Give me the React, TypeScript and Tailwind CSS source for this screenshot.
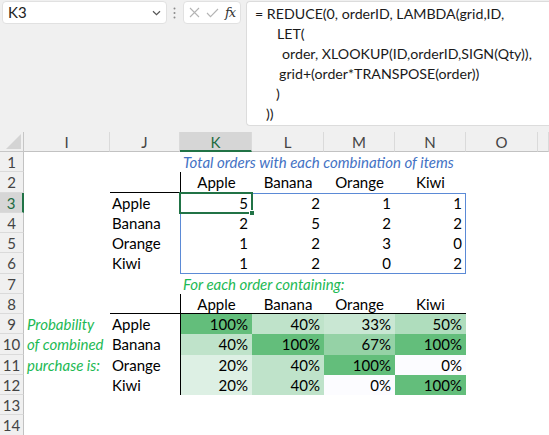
import React from 'react';

const COL = ['', 'col-start-1', 'col-start-2', 'col-start-3', 'col-start-4', 'col-start-5', 'col-start-6', 'col-start-7', 'col-start-8', 'col-start-9'];
const ROW = ['', 'row-start-1', 'row-start-2', 'row-start-3', 'row-start-4', 'row-start-5', 'row-start-6', 'row-start-7', 'row-start-8', 'row-start-9', 'row-start-10', 'row-start-11', 'row-start-12', 'row-start-13', 'row-start-14', 'row-start-15'];

const LETTERS = ['I', 'J', 'K', 'L', 'M', 'N', 'O', ''];
const FRUITS = ['Apple', 'Banana', 'Orange', 'Kiwi'];

const COUNTS = [
  [5, 2, 1, 1],
  [2, 5, 2, 2],
  [1, 2, 3, 0],
  [1, 2, 0, 2],
];

// excel colour scale, white -> green
const SHADE: Record<number, string> = {
  100: 'bg-[#63be7b]',
  67: 'bg-[#95d2a6]',
  50: 'bg-[#afddbd]',
  40: 'bg-[#bfe3ca]',
  33: 'bg-[#c9e7d3]',
  20: 'bg-[#ddf0e4]',
  0: 'bg-[#fcfcff]',
};

const PCT = [
  [100, 40, 33, 50],
  [40, 100, 67, 100],
  [20, 40, 100, 0],
  [20, 40, 0, 100],
];

const FORMULA: { pad: string; text: string }[] = [
  { pad: 'pl-[8px]', text: '= REDUCE(0, orderID, LAMBDA(grid,ID,' },
  { pad: 'pl-[30px]', text: 'LET(' },
  { pad: 'pl-[35px]', text: 'order, XLOOKUP(ID,orderID,SIGN(Qty)),' },
  { pad: 'pl-[32px]', text: 'grid+(order*TRANSPOSE(order))' },
  { pad: 'pl-[29px]', text: ')' },
  { pad: 'pl-[19px]', text: '))' },
];

function FormulaBar() {
  return (
    <div className="flex items-start h-[132px] pt-px pl-[2px]">
      {/* Name box */}
      <div className="w-[165px] h-[23px] bg-white rounded-[4px] border border-[#e1e1e1] flex items-center justify-between pl-[5px] pr-[5px]">
        <span className="text-[15px] leading-none text-[#222]">K3</span>
        <svg width="9" height="6" viewBox="0 0 9 6" className="text-[#555]">
          <path d="M1 1.2 L4.5 4.6 L8 1.2" fill="none" stroke="currentColor" strokeWidth="1.2" />
        </svg>
      </div>

      {/* grip */}
      <svg width="3" height="12" viewBox="0 0 3 12" className="ml-[6px] mt-[6px] text-[#8a8a8a]">
        <circle cx="1.5" cy="1.5" r="1" fill="currentColor" />
        <circle cx="1.5" cy="6" r="1" fill="currentColor" />
        <circle cx="1.5" cy="10.5" r="1" fill="currentColor" />
      </svg>

      {/* cancel / enter / fx */}
      <div className="ml-[7px] w-[58px] h-[23px] bg-white rounded-[4px] border border-[#e1e1e1] flex items-center pl-[5px] gap-[6px]">
        <svg width="11" height="11" viewBox="0 0 11 11" className="text-[#b4b4b4]">
          <path d="M1 1 L10 10 M10 1 L1 10" stroke="currentColor" strokeWidth="1.1" />
        </svg>
        <svg width="13" height="10" viewBox="0 0 13 10" className="text-[#b4b4b4]">
          <path d="M1 5 L4.5 8.7 L12 1" fill="none" stroke="currentColor" strokeWidth="1.1" />
        </svg>
        <span className="font-['DejaVu_Serif',serif] italic text-[13px] leading-none text-[#333] tracking-[-1px]">fx</span>
      </div>

      {/* formula */}
      <div className="ml-[5px] flex-1 h-[125px] bg-white rounded-l-[4px] border border-r-0 border-[#dcdcdc] pt-[2px] text-[14.2px] leading-[20px] text-[#1a1a1a]">
        {FORMULA.map((l, i) => (
          <div key={i} className={`${l.pad} whitespace-nowrap`}>
            {l.text}
          </div>
        ))}
      </div>
    </div>
  );
}

interface CellProps {
  r: number; // grid row
  c: number; // grid column
  className?: string;
  children?: React.ReactNode;
}

function Cell({ r, c, className, children }: CellProps) {
  return (
    <div className={`${ROW[r]} ${COL[c]} leading-[21px] text-[15px] whitespace-nowrap ${className ?? ''}`}>
      {children}
    </div>
  );
}

function Sheet() {
  const cells: React.ReactNode[] = [];

  // column headers
  cells.push(
    <div key="corner" className="row-start-1 col-start-1 bg-[#f0f0f0] border-r border-b border-[#c6c6c6] flex items-end justify-end pr-[2px] pb-[2px]">
      <svg width="15" height="15" viewBox="0 0 15 15">
        <path d="M15 0 L15 15 L0 15 Z" fill="#d4d4d4" />
      </svg>
    </div>
  );
  LETTERS.forEach((l, i) => {
    const selected = l === 'K';
    cells.push(
      <Cell
        key={'h' + i}
        r={1}
        c={i + 2}
        className={`text-center border-r border-[#dadada] ${
          selected
            ? 'bg-[#d6d6d6] text-[#1e6b41] border-b-2 border-b-[#217346]'
            : 'bg-[#f0f0f0] text-[#444] border-b border-b-[#c2c2c2]'
        }`}
      >
        {l}
      </Cell>
    );
  });

  // row headers
  for (let n = 1; n <= 14; n++) {
    const selected = n === 3;
    cells.push(
      <Cell
        key={'r' + n}
        r={n + 1}
        c={1}
        className={`text-center border-b border-[#dadada] ${
          selected
            ? 'bg-[#d6d6d6] text-[#1e6b41] border-r-2 border-r-[#217346]'
            : 'bg-[#f0f0f0] text-[#444] border-r border-r-[#c2c2c2]'
        }`}
      >
        {n}
      </Cell>
    );
  }

  // titles
  cells.push(
    <Cell key="t1" r={2} c={4} className="pl-[3px] italic text-[#4472c4]">
      Total orders with each combination of items
    </Cell>
  );
  cells.push(
    <Cell key="t7" r={8} c={4} className="pl-[3px] italic text-[#1db954]">
      For each order containing:
    </Cell>
  );

  // fruit headers rows 2 and 8
  [3, 9].forEach((gr) => {
    cells.push(<Cell key={'jb' + gr} r={gr} c={3} className="border-b border-black" />);
    FRUITS.forEach((f, i) => {
      const edge = i === 0 ? 'border-l border-black' : '';
      const under = gr === 9 ? 'border-b border-black' : '';
      cells.push(
        <Cell key={'f' + gr + i} r={gr} c={i + 4} className={`text-center ${edge} ${under}`}>
          {f}
        </Cell>
      );
    });
  });

  // counts block, rows 3-6
  COUNTS.forEach((row, ri) => {
    cells.push(
      <Cell key={'cl' + ri} r={ri + 4} c={3} className="pl-[2px]">
        {FRUITS[ri]}
      </Cell>
    );
    row.forEach((v, ci) => {
      cells.push(
        <Cell key={'c' + ri + ci} r={ri + 4} c={ci + 4} className="text-right pr-[4px]">
          {v}
        </Cell>
      );
    });
  });

  // probability block, rows 9-12
  const side = ['Probability', 'of combined', 'purchase is:'];
  PCT.forEach((row, ri) => {
    if (side[ri]) {
      cells.push(
        <Cell key={'s' + ri} r={ri + 10} c={2} className="pl-[3px] italic text-[#1db954]">
          {side[ri]}
        </Cell>
      );
    }
    cells.push(
      <Cell key={'pl' + ri} r={ri + 10} c={3} className="pl-[2px]">
        {FRUITS[ri]}
      </Cell>
    );
    row.forEach((v, ci) => {
      cells.push(
        <Cell
          key={'p' + ri + ci}
          r={ri + 10}
          c={ci + 4}
          className={`text-right pr-[4px] ${SHADE[v]} ${ci === 0 ? 'border-l border-black' : ''}`}
        >
          {v}%
        </Cell>
      );
    });
  });

  return (
    <div className="grid grid-cols-[24px_86px_70px_72px_72px_71px_71px_72px_1fr] grid-rows-[20px_repeat(14,20.25px)] bg-white">
      {cells}
      {/* outline round the count matrix */}
      <div className="row-start-4 row-span-4 col-start-4 col-span-4 border border-[#5b8ad6] pointer-events-none" />
      {/* active cell K3 */}
      <div className="row-start-4 col-start-4 -m-px border-2 border-[#217346] relative pointer-events-none">
        <div className="absolute -right-[4px] -bottom-[4px] w-[6px] h-[6px] bg-[#217346] border border-white" />
      </div>
    </div>
  );
}

export default function App() {
  return (
    <div className="w-[549px] h-[435px] overflow-hidden bg-[#f0f0f0] font-['Lato',sans-serif] text-black">
      <FormulaBar />
      <Sheet />
    </div>
  );
}
